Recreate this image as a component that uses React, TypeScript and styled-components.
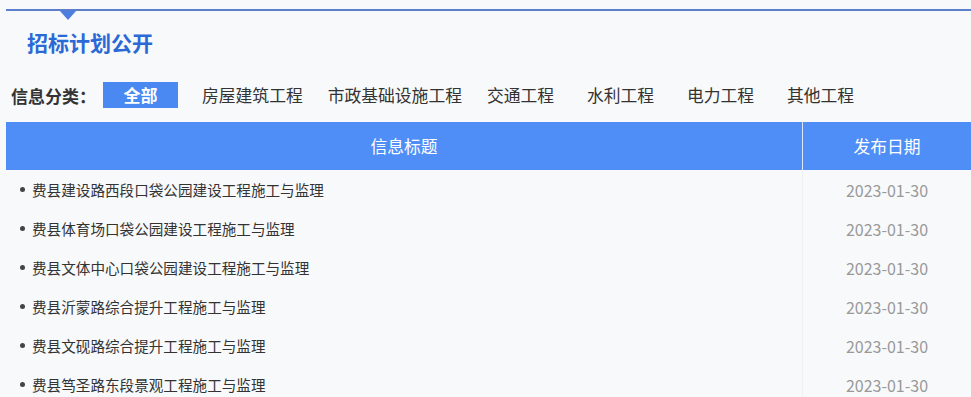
import styled, { createGlobalStyle } from "styled-components";

const GlobalStyle = createGlobalStyle`
  body {
    margin: 0;
    background: #f8f9fb;
    font-family: "Noto Sans CJK SC", "Noto Sans", sans-serif;
    color: #333;
  }
`;

const categories = ["全部", "房屋建筑工程", "市政基础设施工程", "交通工程", "水利工程", "电力工程", "其他工程"];

const rows = [
  { title: "费县建设路西段口袋公园建设工程施工与监理", date: "2023-01-30" },
  { title: "费县体育场口袋公园建设工程施工与监理", date: "2023-01-30" },
  { title: "费县文体中心口袋公园建设工程施工与监理", date: "2023-01-30" },
  { title: "费县沂蒙路综合提升工程施工与监理", date: "2023-01-30" },
  { title: "费县文砚路综合提升工程施工与监理", date: "2023-01-30" },
  { title: "费县笃圣路东段景观工程施工与监理", date: "2023-01-30" },
];

export default function App() {
  return (
    <Page>
      <GlobalStyle />
      <Section>
        <Pointer />
        <Title>招标计划公开</Title>
        <FilterBar>
          <FilterLabel>信息分类：</FilterLabel>
          {categories.map((c, i) => (
            <FilterItem key={c} $active={i === 0}>
              {c}
            </FilterItem>
          ))}
        </FilterBar>
        <Table>
          <HeadRow>
            <HeadCell>信息标题</HeadCell>
            <HeadCell $date>发布日期</HeadCell>
          </HeadRow>
          {rows.map((r) => (
            <Row key={r.title}>
              <TitleCell>{r.title}</TitleCell>
              <DateCell>{r.date}</DateCell>
            </Row>
          ))}
        </Table>
      </Section>
    </Page>
  );
}

const Page = styled("div")`
  padding: 9px 0 0 6px;
  height: 388px;
  overflow: hidden;
`;

const Section = styled("div")`
  border-top: 2px solid #5b7fcc;
`;

const Pointer = styled("div")`
  width: 0;
  height: 0;
  margin-left: 54px;
  border-left: 8px solid transparent;
  border-right: 8px solid transparent;
  border-top: 9px solid #4c7ee0;
`;

const Title = styled("h2")`
  margin: 7px 0 0;
  padding-left: 21px;
  font-size: 21px;
  line-height: 30px;
  font-weight: bold;
  color: #2a69d6;
`;

const FilterBar = styled("div")`
  display: flex;
  align-items: center;
  margin-top: 25px;
  padding-left: 5px;
  height: 26px;
`;

const FilterLabel = styled("span")`
  font-size: 17px;
  font-weight: bold;
  color: #333;
  width: 92px;
`;

const FilterItem = styled("span")<{ $active?: boolean }>`
  font-size: 16.8px;
  line-height: 26px;
  color: #333;
  min-width: 100px;
  padding: 0 13px 0 12px;
  box-sizing: border-box;
  white-space: nowrap;
  ${(p) =>
    p.$active &&
    `
    min-width: 75px;
    width: 75px;
    padding: 0;
    margin-right: 12px;
    text-align: center;
    background: #4a89f2;
    color: #fff;
    font-weight: bold;
    font-size: 17px;
  `}
`;

const Table = styled("div")`
  margin-top: 14px;
`;

const HeadRow = styled("div")`
  display: grid;
  grid-template-columns: 796px 1fr;
  height: 48px;
  background: #4f8ef7;
`;

const HeadCell = styled("div")<{ $date?: boolean }>`
  display: flex;
  align-items: center;
  justify-content: center;
  font-size: 16.8px;
  color: #fff;
  border-left: ${(p) => (p.$date ? "1px solid #dbe8fc" : "none")};
`;

const Row = styled("div")`
  display: grid;
  grid-template-columns: 796px 1fr;
  height: 39px;
`;

const TitleCell = styled("div")`
  display: flex;
  align-items: center;
  padding-left: 14px;
  font-size: 14.6px;
  color: #333;
  &::before {
    content: "";
    width: 5px;
    height: 5px;
    border-radius: 50%;
    background: #444;
    margin-right: 7px;
  }
`;

const DateCell = styled("div")`
  display: flex;
  align-items: center;
  justify-content: center;
  font-size: 16px;
  color: #999;
  border-left: 1px solid #f0f1f3;
`;
